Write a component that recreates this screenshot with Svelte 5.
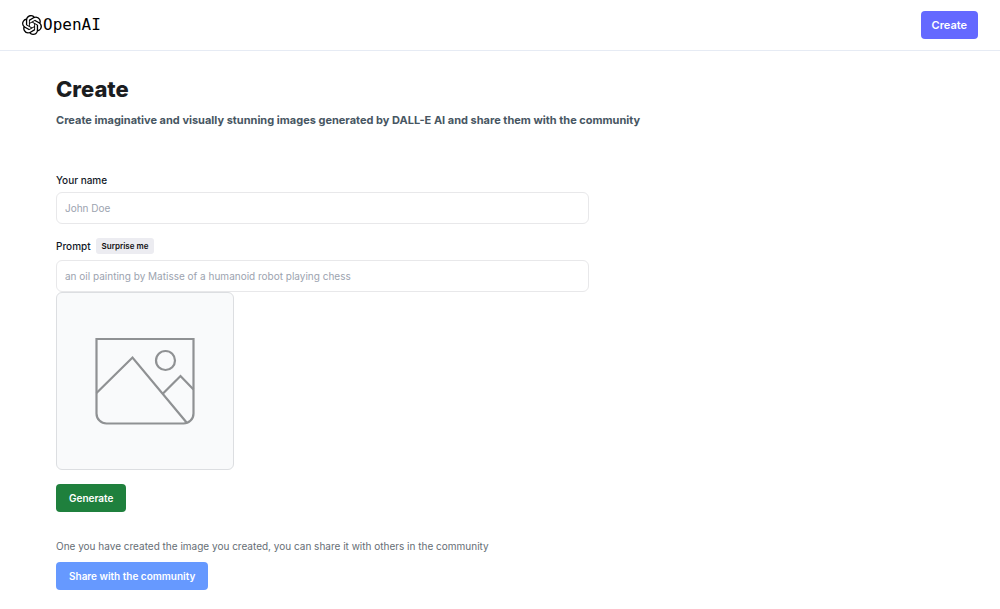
<script>
  const prompts = [
    'an oil painting by Matisse of a humanoid robot playing chess',
    'a bowl of soup that looks like a monster',
    'an astronaut lounging in a tropical resort in space'
  ];

  let name = $state('');
  let prompt = $state('');
  let next = $state(0);

  function surprise() {
    prompt = prompts[next % prompts.length];
    next += 1;
  }
</script>

<header>
  <a class="brand" href="#home">
    <svg viewBox="0 0 24 24" aria-hidden="true">
      <path d="M22.2819 9.8211a5.9847 5.9847 0 0 0-.5157-4.9108 6.0462 6.0462 0 0 0-6.5098-2.9A6.0651 6.0651 0 0 0 4.9807 4.1818a5.9847 5.9847 0 0 0-3.9977 2.9 6.0462 6.0462 0 0 0 .7427 7.0966 5.98 5.98 0 0 0 .511 4.9107 6.051 6.051 0 0 0 6.5146 2.9001A5.9847 5.9847 0 0 0 13.2599 24a6.0557 6.0557 0 0 0 5.7718-4.2058 5.9894 5.9894 0 0 0 3.9977-2.9001 6.0557 6.0557 0 0 0-.7475-7.0729zm-9.022 12.6081a4.4755 4.4755 0 0 1-2.8764-1.0408l.1419-.0804 4.7783-2.7582a.7948.7948 0 0 0 .3927-.6813v-6.7369l2.02 1.1686a.071.071 0 0 1 .038.052v5.5826a4.504 4.504 0 0 1-4.4945 4.4944zm-9.6607-4.1254a4.4708 4.4708 0 0 1-.5346-3.0137l.142.0852 4.783 2.7582a.7712.7712 0 0 0 .7806 0l5.8428-3.3685v2.3324a.0804.0804 0 0 1-.0332.0615L9.74 19.9502a4.4992 4.4992 0 0 1-6.1408-1.6464zM2.3408 7.8956a4.485 4.485 0 0 1 2.3655-1.9728V11.6a.7664.7664 0 0 0 .3879.6765l5.8144 3.3543-2.0201 1.1685a.0757.0757 0 0 1-.071 0l-4.8303-2.7865A4.504 4.504 0 0 1 2.3408 7.872zm16.5963 3.8558L13.1038 8.364 15.1192 7.2a.0757.0757 0 0 1 .071 0l4.8303 2.7913a4.4944 4.4944 0 0 1-.6765 8.1042v-5.6772a.79.79 0 0 0-.407-.667zm2.0107-3.0231l-.142-.0852-4.7735-2.7818a.7759.7759 0 0 0-.7854 0L9.409 9.2297V6.8974a.0662.0662 0 0 1 .0284-.0615l4.8303-2.7866a4.4992 4.4992 0 0 1 6.6802 4.66zM8.3065 12.863l-2.02-1.1638a.0804.0804 0 0 1-.038-.0567V6.0742a4.4992 4.4992 0 0 1 7.3757-3.4537l-.142.0805L8.704 5.459a.7948.7948 0 0 0-.3927.6813zm1.0976-2.3654l2.602-1.4998 2.6069 1.4998v2.9994l-2.5974 1.4997-2.6067-1.4997Z" />
    </svg>
    <span>OpenAI</span>
  </a>
  <a class="create" href="#create">Create</a>
</header>

<main>
  <h1>Create</h1>
  <p class="lead">Create imaginative and visually stunning images generated by DALL-E AI and share them with the community</p>

  <form onsubmit={(e) => e.preventDefault()}>
    <div class="label-row">
      <label for="name">Your name</label>
    </div>
    <input id="name" type="text" placeholder="John Doe" bind:value={name} />

    <div class="label-row second">
      <label for="prompt">Prompt</label>
      <button class="surprise" type="button" onclick={surprise}>Surprise me</button>
    </div>
    <input id="prompt" type="text" placeholder={prompts[0]} bind:value={prompt} />

    <div class="preview">
      <svg viewBox="0 0 100 88" fill="none" stroke="#8f9193" stroke-width="2.2" role="img" aria-label="preview">
        <path d="M1.5 2H98.5V76.500a10 10 0 0 1-10 10H11.500a10 10 0 0 1-10-10Z" />
        <path d="M1.500 56L37.500 20.500L92 86" />
        <path d="M67.500 57L85.500 39L98.500 52.500" />
        <circle cx="70.500" cy="23.500" r="9.500" />
      </svg>
    </div>

    <button class="action generate" type="button">Generate</button>

    <p class="note">One you have created the image you created, you can share it with others in the community</p>
    <button class="action share" type="submit">Share with the community</button>
  </form>
</main>

<style>
  :global(body) {
    margin: 0;
    background: #fff;
    font-family: Inter, "Liberation Sans", sans-serif;
  }

  * {
    box-sizing: border-box;
  }

  header {
    display: flex;
    align-items: center;
    justify-content: space-between;
    padding: 11px 22px;
    border-bottom: 1px solid #e6ebf4;
  }

  .brand {
    display: flex;
    align-items: center;
    gap: 1px;
    color: #000;
    font: 16px/20px "DejaVu Sans Mono", monospace;
    text-decoration: none;
  }

  .brand svg {
    width: 20px;
    height: 20px;
    fill: currentColor;
  }

  .create {
    padding: 6px 11px;
    border-radius: 4px;
    background: #6469ff;
    color: #fff;
    font-size: 11px;
    font-weight: 600;
    line-height: 16px;
    text-decoration: none;
  }

  main {
    padding: 26px 56px 19px;
  }

  h1 {
    margin: 0;
    color: #1b1d1f;
    font-size: 22px;
    font-weight: 800;
    line-height: 24px;
  }

  .lead {
    margin: 11px 0 0;
    color: #475662;
    font-size: 11px;
    font-weight: 700;
    line-height: 16px;
  }

  form {
    max-width: 533px;
    margin-top: 44px;
  }

  .label-row {
    display: flex;
    align-items: center;
    gap: 5px;
    min-height: 16px;
    margin-bottom: 4px;
    color: #111827;
    font-size: 10px;
    font-weight: 500;
  }

  .second {
    margin: 14px 0 6px;
  }

  button {
    border: 0;
    border-radius: 4px;
    font-family: inherit;
    font-weight: 600;
    cursor: pointer;
  }

  .surprise {
    padding: 2px 6px;
    border-radius: 3px;
    background: #ececf1;
    color: #111;
    font-size: 8px;
    line-height: 12px;
  }

  input {
    display: block;
    width: 100%;
    height: 32px;
    padding: 0 8px;
    border: 1px solid #e8e8ea;
    border-radius: 6px;
    background: #fff;
    color: #111827;
    font-family: inherit;
    font-size: 10px;
  }

  input::placeholder {
    color: #9ca3af;
    opacity: 1;
  }

  .preview {
    display: grid;
    place-items: center;
    width: 178px;
    aspect-ratio: 1;
    border: 1px solid #dcdee1;
    border-radius: 6px;
    background: #f9fafb;
  }

  .preview svg {
    width: 100px;
  }

  .action {
    display: block;
    padding: 6px 13px;
    color: #fff;
    font-size: 10px;
    line-height: 16px;
  }

  .generate {
    margin-top: 14px;
    background: #1f803d;
  }

  .note {
    margin: 27px 0 8px;
    color: #666e75;
    font-size: 10px;
    line-height: 15px;
  }

  .share {
    background: #6699ff;
  }
</style>
